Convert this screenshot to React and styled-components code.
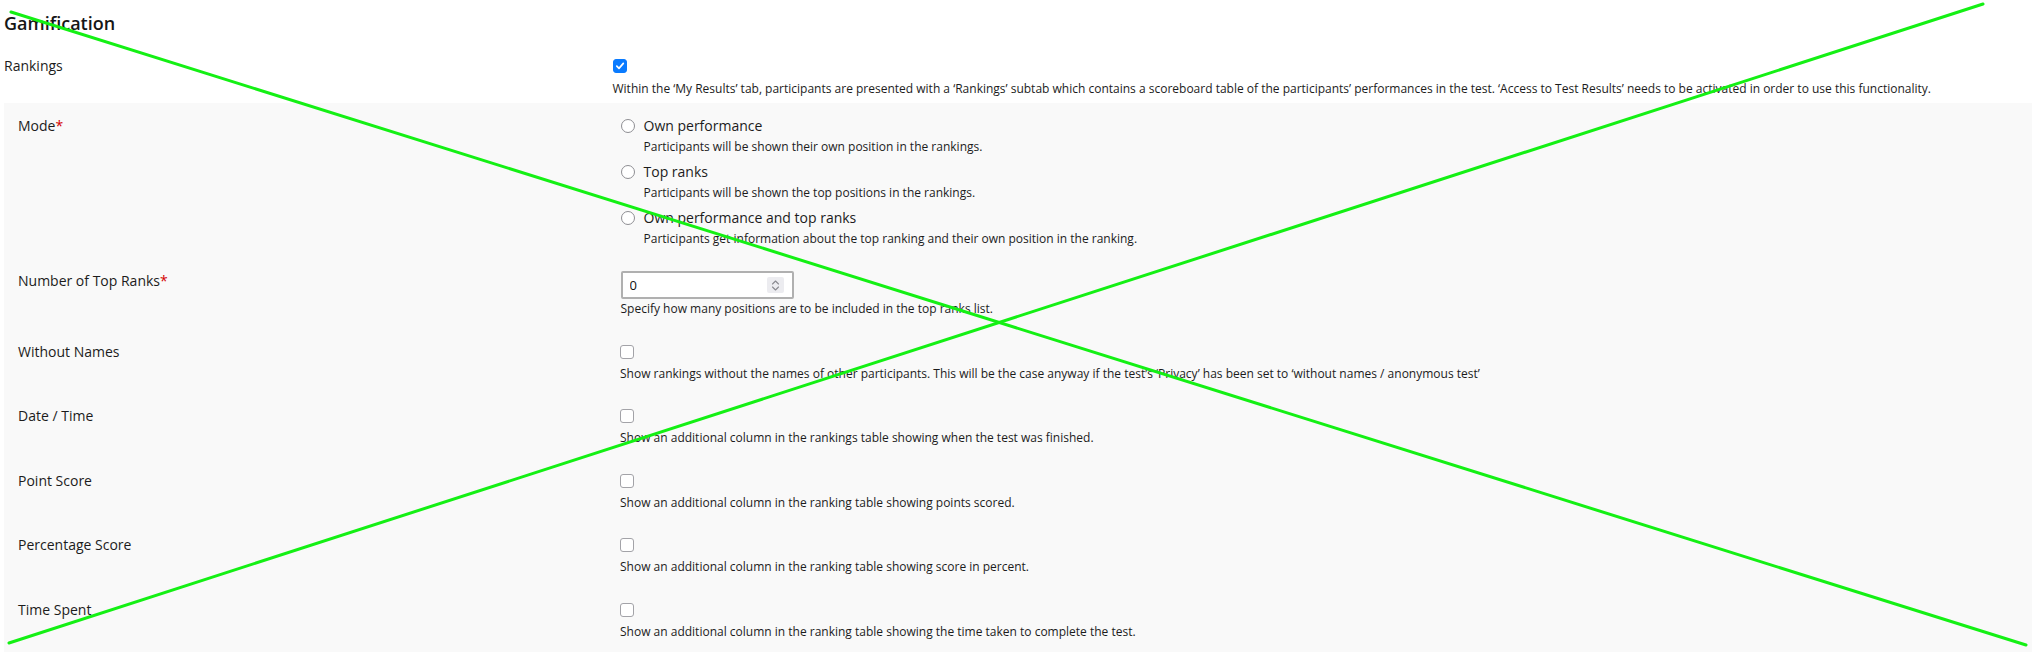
import React from 'react'
import styled, { createGlobalStyle } from 'styled-components'

const GlobalStyle = createGlobalStyle`
  html, body {
    margin: 0;
    padding: 0;
    background: #fff;
  }
  body {
    font-family: "Open Sans", "Liberation Sans", sans-serif;
    color: #1c1c1c;
  }
`

const Page = styled.div`
  position: relative;
  width: 2032px;
  height: 665px;
  padding: 11px 0 0 4px;
  box-sizing: border-box;
  overflow: hidden;
`

const Heading = styled.h2`
  margin: 0;
  font-size: 18px;
  font-weight: 600;
  line-height: 24px;
  color: #161616;
`

const Row = styled.div`
  display: grid;
  grid-template-columns: ${(props) => props.labelWidth || '608.5px'} 1fr;
  align-items: start;
`

const TopRow = styled(Row)`
  margin-top: 20.5px;
  margin-bottom: 6px;
`

const Section = styled.div`
  background: #f9f9f9;
  padding: 13px 0 12px 14px;
  display: flex;
  flex-direction: column;
  gap: 24.5px;
`

const Label = styled.div`
  font-size: 14px;
  line-height: 20px;
  color: #1c1c1c;
`

const Required = styled.span`
  color: #d40000;
`

const Control = styled.div`
  display: flex;
  flex-direction: column;
`

const BoxLine = styled.div`
  height: 20px;
  display: flex;
  align-items: center;
`

const Box = styled.span`
  width: 14px;
  height: 14px;
  box-sizing: border-box;
  border-radius: 3px;
  display: inline-flex;
  align-items: center;
  justify-content: center;
  background: ${(props) => (props.checked ? '#0a7bff' : '#fff')};
  border: 1px solid ${(props) => (props.checked ? '#0a7bff' : '#a3a3a8')};
`

const Help = styled.div`
  font-size: 12px;
  line-height: 16px;
  margin-top: ${(props) => props.mt || '4px'};
  color: #1c1c1c;
  white-space: nowrap;
`

const Options = styled.div`
  display: flex;
  flex-direction: column;
  gap: 7px;
`

const Option = styled.div`
  display: flex;
  flex-direction: column;
`

const OptionHead = styled.label`
  display: flex;
  align-items: center;
  gap: 9px;
  font-size: 14px;
  line-height: 20px;
`

const Radio = styled.span`
  width: 14px;
  height: 14px;
  box-sizing: border-box;
  border-radius: 50%;
  border: 1px solid #8e8e93;
  background: #fff;
`

const OptionHelp = styled(Help)`
  margin-top: 3px;
  padding-left: 23px;
`

const NumberField = styled.div`
  width: 173px;
  height: 28px;
  box-sizing: border-box;
  border: 2px solid #b0b0b0;
  border-radius: 2px;
  background: #fff;
  display: flex;
  align-items: center;
  padding: 0 8px 0 7px;
`

const NumberInput = styled.input`
  flex: 1;
  min-width: 0;
  border: none;
  outline: none;
  background: transparent;
  font-family: "Open Sans", "Liberation Sans", sans-serif;
  font-size: 13px;
  color: #111;
  padding: 0;
`

const Spinner = styled.span`
  width: 17px;
  height: 16px;
  border-radius: 2px;
  background: #ececf0;
  display: flex;
  align-items: center;
  justify-content: center;
`

const Overlay = styled.svg`
  position: absolute;
  left: 0;
  top: 0;
  pointer-events: none;
`

const Check = ({ checked }) => (
  <Box checked={checked}>
    {checked && (
      <svg width="10" height="10" viewBox="0 0 10 10">
        <path d="M1.8 5.2 L4 7.4 L8.3 2.4" fill="none" stroke="#fff" strokeWidth="1.7" strokeLinecap="round" strokeLinejoin="round" />
      </svg>
    )}
  </Box>
)

const modes = [
  { title: 'Own performance', help: 'Participants will be shown their own position in the rankings.' },
  { title: 'Top ranks', help: 'Participants will be shown the top positions in the rankings.' },
  { title: 'Own performance and top ranks', help: 'Participants get information about the top ranking and their own position in the ranking.' },
]

const checks = [
  { label: 'Without Names', help: 'Show rankings without the names of other participants. This will be the case anyway if the test’s ‘Privacy’ has been set to ‘without names / anonymous test’' },
  { label: 'Date / Time', help: 'Show an additional column in the rankings table showing when the test was finished.' },
  { label: 'Point Score', help: 'Show an additional column in the ranking table showing points scored.' },
  { label: 'Percentage Score', help: 'Show an additional column in the ranking table showing score in percent.' },
  { label: 'Time Spent', help: 'Show an additional column in the ranking table showing the time taken to complete the test.' },
]

export default function App() {
  return (
    <>
      <GlobalStyle />
      <Page>
        <Heading>Gamification</Heading>
        <TopRow>
          <Label>Rankings</Label>
          <Control>
            <BoxLine><Check checked /></BoxLine>
            <Help mt="5px">
              Within the ‘My Results’ tab, participants are presented with a ‘Rankings’ subtab which contains a scoreboard table of the participants’ performances in the test. ‘Access to Test Results’ needs to be activated in order to use this functionality.
            </Help>
          </Control>
        </TopRow>
        <Section>
          <Row labelWidth="602.5px">
            <Label>Mode<Required>*</Required></Label>
            <Options>
              {modes.map((m) => (
                <Option key={m.title}>
                  <OptionHead><Radio />{m.title}</OptionHead>
                  <OptionHelp>{m.help}</OptionHelp>
                </Option>
              ))}
            </Options>
          </Row>
          <Row labelWidth="602.5px">
            <Label>Number of Top Ranks<Required>*</Required></Label>
            <Control>
              <NumberField>
                <NumberInput type="text" defaultValue="0" />
                <Spinner>
                  <svg width="9" height="13" viewBox="0 0 9 13">
                    <path d="M1.5 5 L4.5 2 L7.5 5 M1.5 8 L4.5 11 L7.5 8" fill="none" stroke="#8a8a90" strokeWidth="1.1" strokeLinecap="round" strokeLinejoin="round" />
                  </svg>
                </Spinner>
              </NumberField>
              <Help mt="2px">Specify how many positions are to be included in the top ranks list.</Help>
            </Control>
          </Row>
          {checks.map((c) => (
            <Row key={c.label} labelWidth="602px">
              <Label>{c.label}</Label>
              <Control>
                <BoxLine><Check /></BoxLine>
                <Help>{c.help}</Help>
              </Control>
            </Row>
          ))}
        </Section>
        <Overlay width="2032" height="665" viewBox="0 0 2032 665">
          <line x1="11" y1="12" x2="2026" y2="645" stroke="#14f014" strokeWidth="3" strokeLinecap="round" />
          <line x1="9" y1="643" x2="1983" y2="4" stroke="#14f014" strokeWidth="3" strokeLinecap="round" />
        </Overlay>
      </Page>
    </>
  )
}
